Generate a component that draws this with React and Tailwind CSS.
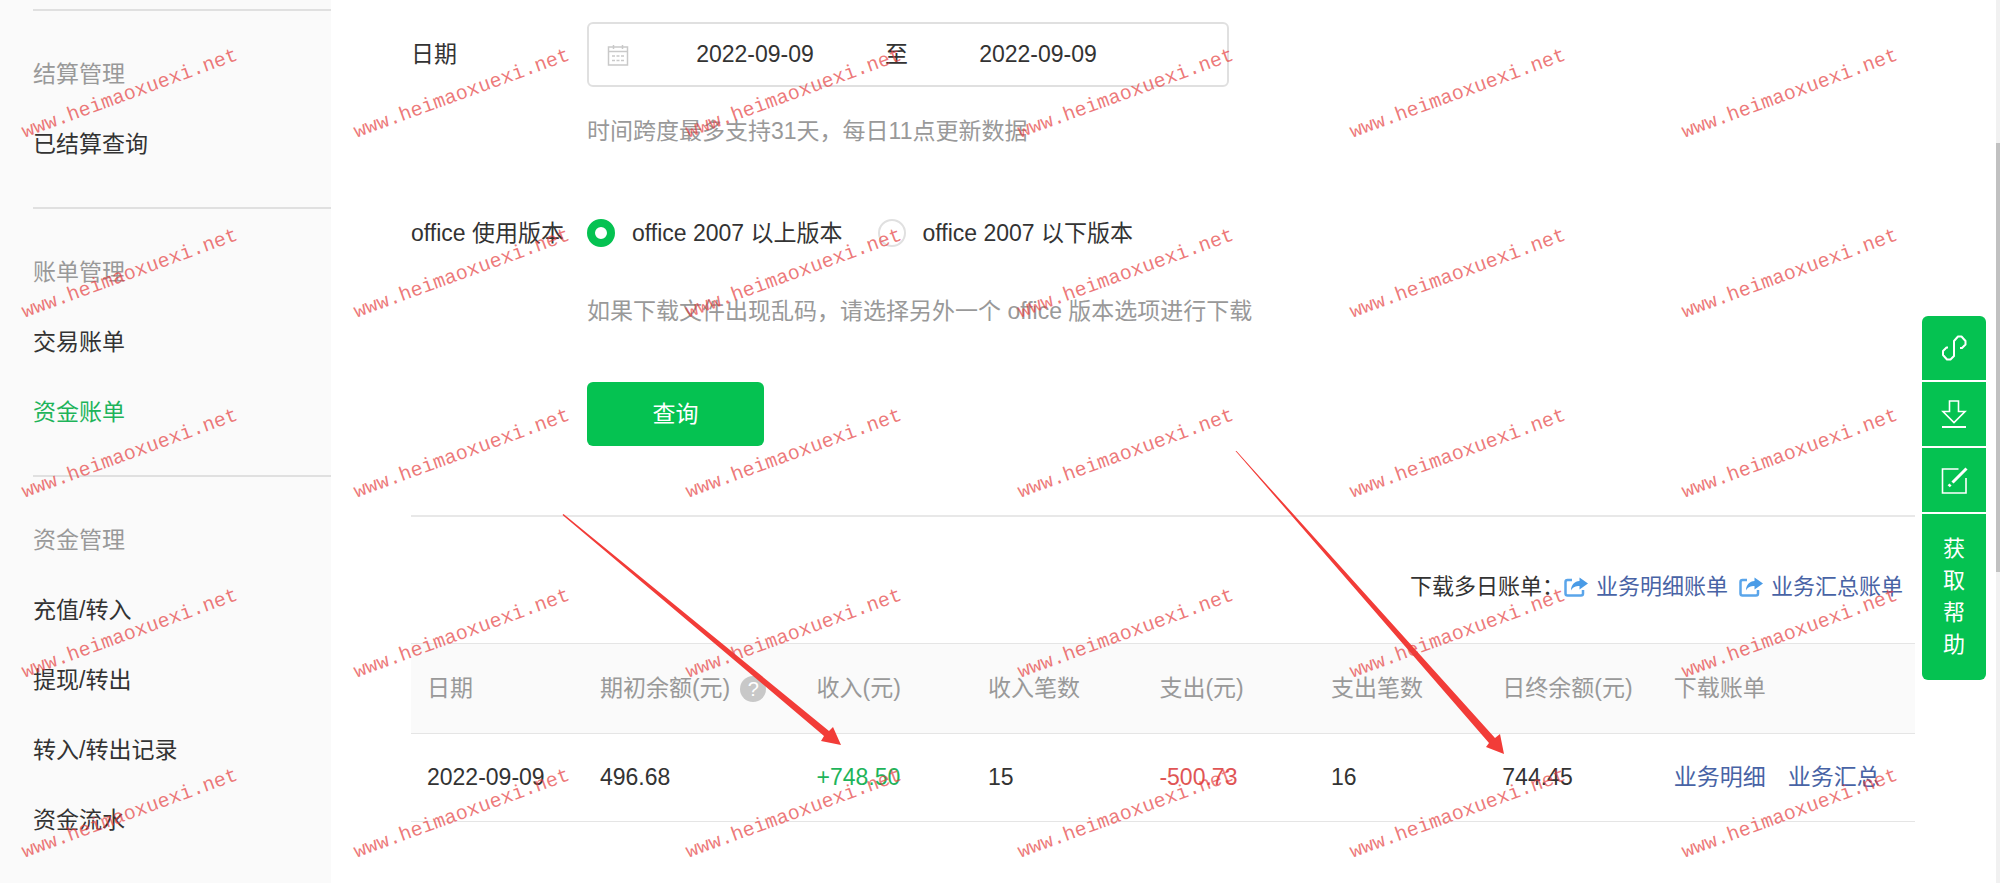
const sections = [
  { title: "结算管理", items: ["已结算查询"] },
  { title: "账单管理", items: ["交易账单", "资金账单"] },
  { title: "资金管理", items: ["充值/转入", "提现/转出", "转入/转出记录", "资金流水"] },
];

const columns = ["日期", "期初余额(元)", "收入(元)", "收入笔数", "支出(元)", "支出笔数", "日终余额(元)", "下载账单"];

function Sidebar() {
  return (
    <nav className="w-[331px] shrink-0 bg-[#fafafa] pt-[9px] pl-[33px]">
      {sections.map((s) => (
        <section key={s.title} className="border-t-2 border-[#e0e0e0] pt-7 pb-7">
          <h2 className="flex h-[70px] items-center text-[#999]">{s.title}</h2>
          <ul>
            {s.items.map((item) => (
              <li key={item} className="flex h-[70px] items-center">
                <a href="#" className={item === "资金账单" ? "text-[#1eb45a]" : "text-[#333]"}>{item}</a>
              </li>
            ))}
          </ul>
        </section>
      ))}
    </nav>
  );
}

function CalendarIcon() {
  return (
    <svg viewBox="0 0 22 22" className="size-[22px] shrink-0" fill="none" stroke="#c9c9c9" strokeWidth="1.5" aria-hidden="true">
      <rect x="1.5" y="3" width="19" height="18" />
      <path d="M1.5 7.500h19M6.500 1v4M15.500 1v4" />
      <path d="M5 12h3M9.500 12h3M14 12h3M5 16.500h3M9.500 16.500h3M14 16.500h3" strokeWidth="1.500" />
    </svg>
  );
}

function ShareIcon() {
  return (
    <svg viewBox="0 0 24 20" className="h-5 w-6 shrink-0" aria-hidden="true">
      <path d="M8 3H3.500Q1.500 3 1.500 5v11.500q0 2 2 2H17q2 0 2-2V13" fill="none" stroke="#5aa5ea" strokeWidth="2.500" />
      <path d="M15.500 0.500 24 6.500l-8.500 6V9C11.500 9 9 10 7 13.500 7 8 10.500 4.300 15.500 4z" fill="#4a9be6" />
    </svg>
  );
}

function Radio({ label, checked }) {
  return (
    <label className="flex items-center gap-[17px]">
      <input
        type="radio"
        name="office"
        defaultChecked={checked}
        className="size-7 appearance-none rounded-full border-2 border-[#e0e0e0] bg-transparent checked:border-[8px] checked:border-[#05c251] checked:bg-white"
      />
      {label}
    </label>
  );
}

function QueryForm() {
  return (
    <form className="grid grid-cols-[176px_1fr] items-center" onSubmit={(e) => e.preventDefault()}>
      <label htmlFor="start">日期</label>
      <div className="flex h-[65px] w-[642px] items-center rounded-md border-2 border-[#e0e0e0] pl-[18px]">
        <CalendarIcon />
        <input id="start" type="text" aria-label="开始日期" defaultValue="2022-09-09" className="ml-[34px] w-[184px] text-center outline-none" />
        <span className="mx-[38px]">至</span>
        <input type="text" aria-label="结束日期" defaultValue="2022-09-09" className="w-[184px] text-center outline-none" />
      </div>
      <p className="col-start-2 mt-7 leading-8 text-[#999]">时间跨度最多支持31天，每日11点更新数据</p>
      <span className="mt-[70px] leading-8 whitespace-nowrap">office 使用版本</span>
      <div className="mt-[70px] flex h-8 items-center gap-[35px]">
        <Radio label="office 2007 以上版本" checked />
        <Radio label="office 2007 以下版本" />
      </div>
      <p className="col-start-2 mt-[46px] leading-8 text-[#999]">如果下载文件出现乱码，请选择另外一个 office 版本选项进行下载</p>
      <button type="submit" className="col-start-2 mt-[55px] h-16 w-[177px] rounded-md bg-[#05c251] text-white">查询</button>
    </form>
  );
}

function BillTable() {
  return (
    <table className="w-full table-fixed border-collapse text-left whitespace-nowrap">
      <colgroup>
        <col className="w-[11.5%]" />
        <col className="w-[14.4%]" />
        <col className="w-[11.4%]" />
        <col className="w-[11.4%]" />
        <col className="w-[11.4%]" />
        <col className="w-[11.4%]" />
        <col className="w-[11.4%]" />
        <col />
      </colgroup>
      <thead>
        <tr className="h-[90px] border-y border-[#e5e5e5] bg-[#fafafa] text-[#999]">
          {columns.map((c) => (
            <th key={c} className="pl-4 font-normal">
              <span className="flex items-center gap-2.5">
                {c}
                {c.startsWith("期初") && (
                  <span className="flex size-[26px] items-center justify-center rounded-full bg-[#c8c8c8] text-xl leading-none text-white">?</span>
                )}
              </span>
            </th>
          ))}
        </tr>
      </thead>
      <tbody>
        <tr className="h-[88px] border-b border-[#e5e5e5]">
          <td className="pl-4">2022-09-09</td>
          <td className="pl-4">496.68</td>
          <td className="pl-4 text-[#1eb45a]">+748.50</td>
          <td className="pl-4">15</td>
          <td className="pl-4 text-[#e05555]">-500.73</td>
          <td className="pl-4">16</td>
          <td className="pl-4">744.45</td>
          <td className="pl-4 text-[#4863a5]">
            <a href="#" className="mr-[22px]">业务明细</a>
            <a href="#">业务汇总</a>
          </td>
        </tr>
      </tbody>
    </table>
  );
}

function HelpBar() {
  const cell = "flex h-16 items-center justify-center bg-[#05c251]";
  return (
    <aside className="absolute top-[316px] right-[14px] flex w-16 flex-col gap-0.5 overflow-hidden rounded-md text-[22px] text-white">
      <button type="button" aria-label="链接" className={cell}>
        <svg viewBox="0 0 26 26" className="size-[26px]" fill="none" stroke="currentColor" strokeWidth="2" aria-hidden="true">
          <path d="M7 12.500H5.500L2 16v4l4 4.500h3.500L13 21V6l4-4.500h3.500L24.500 6v3.500L21 13h-2" strokeLinejoin="round" />
        </svg>
      </button>
      <button type="button" aria-label="下载" className={cell}>
        <svg viewBox="0 0 26 28" className="h-7 w-[26px]" fill="none" stroke="currentColor" strokeWidth="1.600" aria-hidden="true">
          <path d="M8.500 1h9v10.500h6.500L13 22.500 2 11.500h6.500z" />
          <path d="M1 27h24" strokeWidth="2" />
        </svg>
      </button>
      <button type="button" aria-label="反馈" className={cell}>
        <svg viewBox="0 0 27 27" className="size-[27px]" fill="none" stroke="currentColor" strokeWidth="1.600" aria-hidden="true">
          <path d="M17.500 2H1.500v24h23.500V11" />
          <path d="M25.500 1.500 11.500 15.500" strokeWidth="3" />
          <path d="m9.500 17.500-1.800 1.800" strokeWidth="3" />
        </svg>
      </button>
      <button type="button" className="flex h-[166px] flex-col items-center justify-center bg-[#05c251] leading-8">
        {[..."获取帮助"].map((ch) => (
          <span key={ch}>{ch}</span>
        ))}
      </button>
    </aside>
  );
}

function Watermark() {
  return (
    <div aria-hidden="true" className="pointer-events-none absolute inset-0 grid auto-rows-[180px] grid-cols-[repeat(6,332px)] overflow-hidden pt-1 font-['Liberation_Mono',monospace] text-[20px] text-[#e53e3e]/70">
      {Array.from({ length: 30 }, (_, i) => (
        <div key={i} className="flex items-center pl-4">
          <span className="-rotate-20">www.heimaoxuexi.net</span>
        </div>
      ))}
    </div>
  );
}

export default function App() {
  return (
    <div className="relative flex min-h-screen overflow-hidden bg-white font-['Liberation_Sans','Noto_Sans_CJK_SC',sans-serif] text-[23px] text-[#333]">
      <Sidebar />
      <main className="min-w-0 flex-1 pt-[22px] pr-[85px] pl-20">
        <QueryForm />
        <div className="mt-[69px] flex items-center justify-end border-t-2 border-[#e8e8e8] pt-[54px] pr-3 pb-10 text-[22px] leading-8">
          <span>下载多日账单：</span>
          <div className="flex gap-[11px]">
            {["业务明细账单", "业务汇总账单"].map((t) => (
              <a key={t} href="#" className="flex items-center gap-2 text-[#4863a5]">
                <ShareIcon />
                {t}
              </a>
            ))}
          </div>
        </div>
        <BillTable />
      </main>

      <svg viewBox="0 0 2000 883" className="pointer-events-none absolute top-0 left-0 h-[883px] w-[2000px] max-w-none" fill="#f23c38" aria-hidden="true">
        <path d="M562.500 515 563.500 514 829 731 833 727 841 745 821 741 824 736z" />
        <path d="M1235.500 451 1236.500 451 1495 738 1500 734 1504 754 1486 747 1489 743z" />
      </svg>

      <Watermark />
      <HelpBar />
      <div aria-hidden="true" className="absolute inset-y-0 right-0 w-1 bg-[#f1f1f1] pt-[143px]">
        <div className="h-[429px] bg-[#c1c1c1]" />
      </div>
    </div>
  );
}
